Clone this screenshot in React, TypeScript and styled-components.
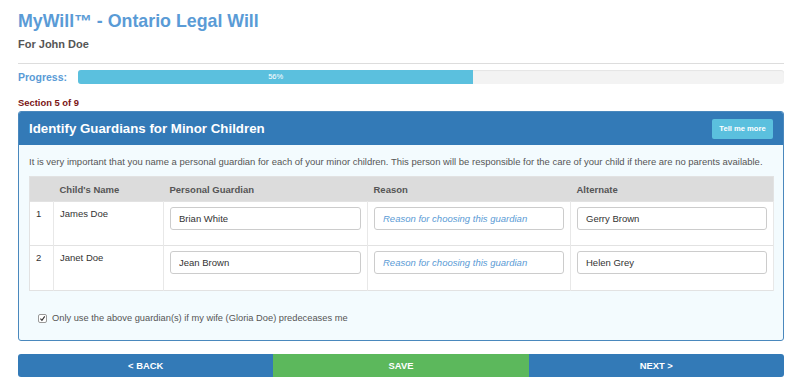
import React from 'react'
import styled, { createGlobalStyle } from 'styled-components'

const GlobalStyle = createGlobalStyle`
  body {
    margin: 0;
    background: #fff;
    font-family: 'Liberation Sans', Arial, sans-serif;
    color: #555;
  }
`

const children = [
  { id: 1, name: 'James Doe', guardian: 'Brian White', alternate: 'Gerry Brown' },
  { id: 2, name: 'Janet Doe', guardian: 'Jean Brown', alternate: 'Helen Grey' },
]

const progress = 56

const App: React.FC<{}> = () => {
  return (
    <>
      <GlobalStyle />
      <Page>
        <Title>MyWill™ - Ontario Legal Will</Title>
        <Subtitle>For John Doe</Subtitle>
        <Rule />

        <ProgressRow>
          <ProgressLabel>Progress:</ProgressLabel>
          <Track>
            <Fill style={{ width: `${progress}%` }}>{progress}%</Fill>
          </Track>
        </ProgressRow>

        <SectionLabel>Section 5 of 9</SectionLabel>

        <Panel>
          <PanelHeader>
            <PanelTitle>Identify Guardians for Minor Children</PanelTitle>
            <InfoButton>Tell me more</InfoButton>
          </PanelHeader>

          <PanelBody>
            <Intro>
              It is very important that you name a personal guardian for each of your minor children. This person will be
              responsible for the care of your child if there are no parents available.
            </Intro>

            <Table>
              <thead>
                <tr>
                  <Th $width={24} />
                  <Th $width={110}>Child's Name</Th>
                  <Th $width={204}>Personal Guardian</Th>
                  <Th $width={203}>Reason</Th>
                  <Th $width={203}>Alternate</Th>
                </tr>
              </thead>
              <tbody>
                {children.map(({ id, name, guardian, alternate }, i) => (
                  <Row key={id} $height={i === 0 ? 44 : 45}>
                    <Td>{id}</Td>
                    <Td>{name}</Td>
                    <InputCell>
                      <Field defaultValue={guardian} />
                    </InputCell>
                    <InputCell>
                      <Field placeholder='Reason for choosing this guardian' />
                    </InputCell>
                    <InputCell>
                      <Field defaultValue={alternate} />
                    </InputCell>
                  </Row>
                ))}
              </tbody>
            </Table>

            <CheckRow>
              <CheckBox>
                <svg width='7' height='7' viewBox='0 0 10 10'>
                  <path d='M2 5.2 L4.2 7.6 L8.2 2' fill='none' stroke='#333' strokeWidth='1.6' />
                </svg>
              </CheckBox>
              Only use the above guardian(s) if my wife (Gloria Doe) predeceases me
            </CheckRow>
          </PanelBody>
        </Panel>

        <NavBar>
          <NavButton $color='#337ab7'>&lt; BACK</NavButton>
          <NavButton $color='#5cb85c'>SAVE</NavButton>
          <NavButton $color='#337ab7'>NEXT &gt;</NavButton>
        </NavBar>
      </Page>
    </>
  )
}

const Page = styled.div`
  padding: 8px 16px 0 18px;
`

const Title = styled.h1`
  margin: 0;
  font-size: 17.8px;
  line-height: 26px;
  font-weight: bold;
  color: #5a9bd6;
`

const Subtitle = styled.h2`
  margin: 2px 0 0;
  font-size: 11px;
  line-height: 16px;
  font-weight: bold;
  color: #555;
`

const Rule = styled.hr`
  margin: 11px 0 0;
  border: 0;
  border-top: 1px solid #ddd;
`

const ProgressRow = styled.div`
  display: flex;
  align-items: center;
  margin-top: 6px;
  height: 14px;
`

const ProgressLabel = styled.div`
  width: 60px;
  font-size: 10.5px;
  font-weight: bold;
  color: #5a9bd6;
`

const Track = styled.div`
  flex: 1;
  height: 14px;
  background: #f3f3f3;
  border-radius: 3px;
  overflow: hidden;
  box-shadow: inset 0 1px 1px rgba(0, 0, 0, 0.06);
`

const Fill = styled.div`
  height: 100%;
  background: #5bc0de;
  color: #fff;
  font-size: 7.5px;
  line-height: 14px;
  text-align: center;
`

const SectionLabel = styled.div`
  margin-top: 12px;
  font-size: 9.4px;
  line-height: 13px;
  font-weight: bold;
  color: #7a1414;
`

const Panel = styled.section`
  margin-top: 2px;
  border: 1px solid #4a88bd;
  border-radius: 3px;
  background: #f3fbfe;
  overflow: hidden;
`

const PanelHeader = styled.div`
  display: flex;
  align-items: center;
  justify-content: space-between;
  height: 33px;
  padding: 0 10px;
  background: #337ab7;
`

const PanelTitle = styled.h3`
  margin: 0;
  font-size: 13.3px;
  font-weight: bold;
  color: #fff;
`

const InfoButton = styled.button`
  height: 20px;
  width: 61px;
  padding: 0;
  border: 0;
  border-radius: 2px;
  background: #5bc0de;
  color: #fff;
  font-family: 'Liberation Sans', Arial, sans-serif;
  font-size: 7.6px;
  font-weight: bold;
`

const PanelBody = styled.div`
  padding: 9px 10px 14px;
`

const Intro = styled.p`
  margin: 0 0 6px;
  font-size: 9.48px;
  line-height: 16px;
  color: #555;
`

const Table = styled.table`
  width: 100%;
  border-collapse: collapse;
  table-layout: fixed;
  background: #fff;
  border: 1px solid #e2e2e2;
  font-size: 9.5px;
`

const Th = styled.th<{ $width: number }>`
  width: ${(p) => p.$width}px;
  height: 25px;
  padding: 0 6px;
  background: #dcdcdc;
  text-align: left;
  font-weight: bold;
  color: #555;
  box-sizing: border-box;
`

const Row = styled.tr<{ $height: number }>`
  height: ${(p) => p.$height}px;
  border-top: 1px solid #e2e2e2;
`

const Td = styled.td`
  padding: 4px 6px 0;
  vertical-align: top;
  color: #333;
  line-height: 16px;
  border-right: 1px solid #e8e8e8;
`

const InputCell = styled(Td)`
  padding-top: 5px;
`

const Field = styled.input`
  display: block;
  box-sizing: border-box;
  width: 100%;
  height: 23px;
  padding: 0 8px;
  border: 1px solid #ccc;
  border-radius: 3px;
  background: #fff;
  font-family: 'Liberation Sans', Arial, sans-serif;
  font-size: 9.5px;
  color: #333;

  &::placeholder {
    color: #5b9bd5;
    font-style: italic;
  }
`

const CheckRow = styled.label`
  display: flex;
  align-items: center;
  gap: 5px;
  margin-top: 19px;
  padding-left: 9px;
  font-size: 9.3px;
  line-height: 16px;
  color: #555;
`

const CheckBox = styled.span`
  display: flex;
  align-items: center;
  justify-content: center;
  width: 7px;
  height: 7px;
  border: 1px solid #999;
  border-radius: 2px;
  background: #fff;
`

const NavBar = styled.div`
  display: grid;
  grid-template-columns: repeat(3, 1fr);
  margin-top: 13px;
  border-radius: 3px;
  overflow: hidden;
`

const NavButton = styled.button<{ $color: string }>`
  height: 23px;
  border: 0;
  padding: 0;
  background: ${(p) => p.$color};
  color: #fff;
  font-family: 'Liberation Sans', Arial, sans-serif;
  font-size: 9.4px;
  font-weight: bold;
`

export default App
